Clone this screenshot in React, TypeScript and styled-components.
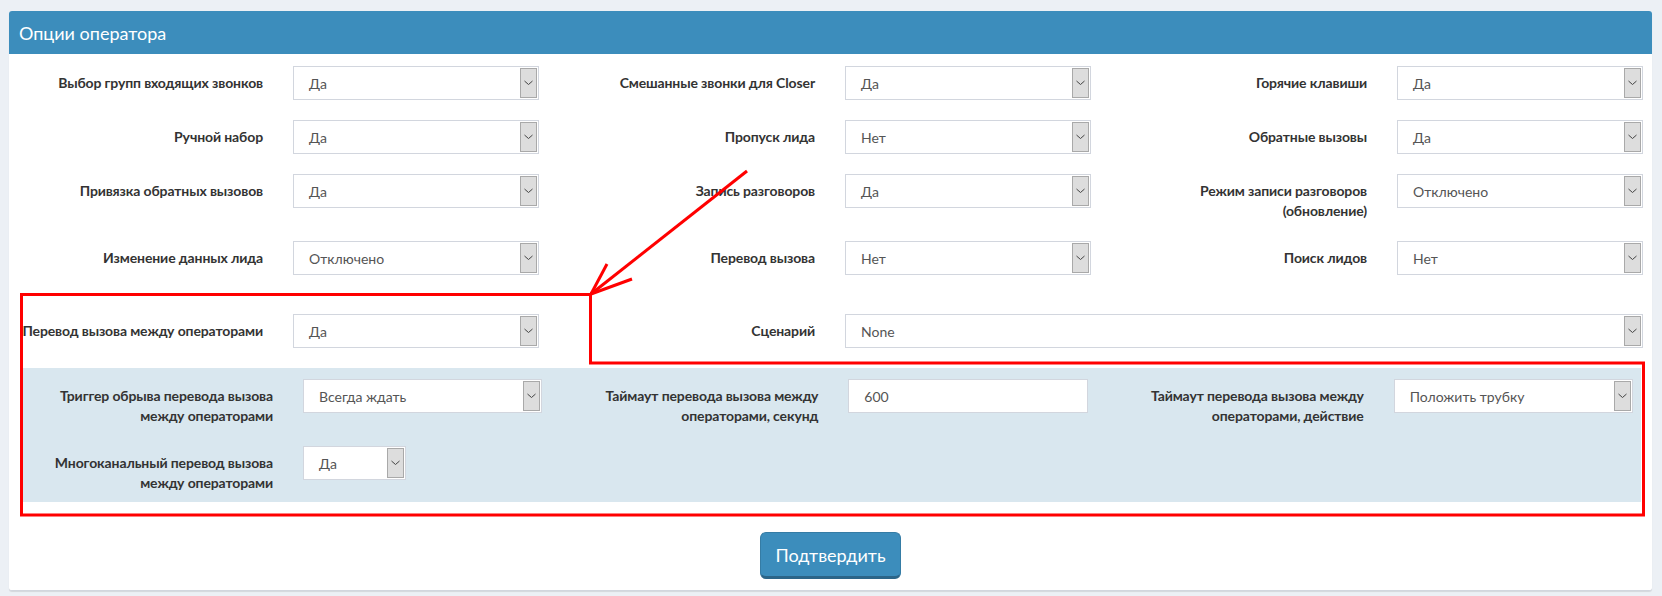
import React from "react";
import styled, { createGlobalStyle } from "styled-components";

// Operator options form (AdminLTE-like box) with a red hand-drawn annotation on top

const GlobalStyle = createGlobalStyle`
  html, body {
    margin: 0;
    padding: 0;
    background: #ecf0f5;
  }
  body {
    font-family: Lato, "Noto Sans", "Liberation Sans", sans-serif;
    color: #333;
  }
  * {
    box-sizing: border-box;
  }
`;

type Option = {
  label: React.ReactNode;
  value: string;
  kind?: "select" | "input";
  width?: number;
  span?: number;
};

const mainRows: Option[] = [
  { label: "Выбор групп входящих звонков", value: "Да" },
  { label: "Смешанные звонки для Closer", value: "Да" },
  { label: "Горячие клавиши", value: "Да" },
  { label: "Ручной набор", value: "Да" },
  { label: "Пропуск лида", value: "Нет" },
  { label: "Обратные вызовы", value: "Да" },
  { label: "Привязка обратных вызовов", value: "Да" },
  { label: "Запись разговоров", value: "Да" },
  {
    label: (
      <>
        Режим записи разговоров
        <br />
        (обновление)
      </>
    ),
    value: "Отключено",
  },
  { label: "Изменение данных лида", value: "Отключено" },
  { label: "Перевод вызова", value: "Нет" },
  { label: "Поиск лидов", value: "Нет" },
];

const transferRows: Option[] = [
  { label: "Перевод вызова между операторами", value: "Да" },
  { label: "Сценарий", value: "None", span: 2 },
];

const subRows: Option[] = [
  {
    label: (
      <>
        Триггер обрыва перевода вызова
        <br />
        между операторами
      </>
    ),
    value: "Всегда ждать",
  },
  {
    label: (
      <>
        Таймаут перевода вызова между
        <br />
        операторами, секунд
      </>
    ),
    value: "600",
    kind: "input",
  },
  {
    label: (
      <>
        Таймаут перевода вызова между
        <br />
        операторами, действие
      </>
    ),
    value: "Положить трубку",
  },
  {
    label: (
      <>
        Многоканальный перевод вызова
        <br />
        между операторами
      </>
    ),
    value: "Да",
    width: 103,
  },
];

const Chevron = () => (
  <svg width="9" height="6" viewBox="0 0 9 6">
    <polyline points="0.5,1 4.5,4.5 8.5,1" fill="none" stroke="#444" strokeWidth="1" />
  </svg>
);

const FieldRow = ({ opt }: { opt: Option }) => (
  <Field $span={opt.span || 1}>
    <Label>{opt.label}</Label>
    {opt.kind === "input" ? (
      <TextBox>{opt.value}</TextBox>
    ) : (
      <SelectBox $width={opt.width}>
        <span>{opt.value}</span>
        <ArrowButton>
          <Chevron />
        </ArrowButton>
      </SelectBox>
    )}
  </Field>
);

const App = () => {
  return (
    <Page>
      <GlobalStyle />
      <Box>
        <BoxHeader>
          <BoxTitle>Опции оператора</BoxTitle>
        </BoxHeader>
        <BoxBody>
          <FieldGrid>
            {mainRows.map((opt, i) => (
              <FieldRow key={i} opt={opt} />
            ))}
          </FieldGrid>
          <FieldGrid $top={39}>
            {transferRows.map((opt, i) => (
              <FieldRow key={i} opt={opt} />
            ))}
          </FieldGrid>
          <SubPanel>
            <FieldGrid $inner>
              {subRows.map((opt, i) => (
                <FieldRow key={i} opt={opt} />
              ))}
            </FieldGrid>
          </SubPanel>
          <Footer>
            <SubmitButton type="button">Подтвердить</SubmitButton>
          </Footer>
        </BoxBody>
      </Box>

      {/* red annotation drawn over the screenshot */}
      <Annotation viewBox="0 0 1662 596" width="1662" height="596">
        <path
          d="M21.5 294.5 H590.5 V363 H1643.5 V515 H21.5 Z"
          fill="none"
          stroke="#ff0000"
          strokeWidth="3"
        />
        <line x1="747" y1="171" x2="591" y2="294" stroke="#ff0000" strokeWidth="3" />
        <line x1="591" y1="294" x2="607" y2="264" stroke="#ff0000" strokeWidth="3" />
        <line x1="591" y1="294" x2="632" y2="279" stroke="#ff0000" strokeWidth="3" />
      </Annotation>
    </Page>
  );
};

const Page = styled.div`
  position: relative;
  width: 1662px;
  min-height: 596px;
  padding: 11px 10px 6px 9px;
`;

const Box = styled.div`
  background: #fff;
  border-radius: 3px;
  box-shadow: 0 1px 1px rgba(0, 0, 0, 0.1);
  border-bottom: 1px solid #d2d6de;
`;

const BoxHeader = styled.div`
  height: 43px;
  display: flex;
  align-items: center;
  padding: 0 10px;
  background: #3c8dbc;
  border-radius: 3px 3px 0 0;
`;

const BoxTitle = styled.h3`
  margin: 0;
  font-size: 18px;
  font-weight: 400;
  color: #fff;
`;

const BoxBody = styled.div`
  padding-top: 12px;
  padding-bottom: 11px;
`;

const FieldGrid = styled.div<{ $top?: number; $inner?: boolean }>`
  display: grid;
  grid-template-columns: repeat(3, 1fr);
  row-gap: 20px;
  margin: ${(p) => (p.$inner ? "0 -7px 0 -10px" : `${p.$top || 0}px -6px 0 -7px`)};
`;

const Field = styled.div<{ $span: number }>`
  grid-column: span ${(p) => p.$span};
  display: grid;
  grid-template-columns: 246px 1fr;
  column-gap: 30px;
  align-items: start;
  padding: 0 15px;
`;

const Label = styled.label`
  padding-top: 7px;
  font-size: 14px;
  line-height: 20px;
  font-weight: 700;
  letter-spacing: -0.12px;
  text-align: right;
  white-space: nowrap;
  color: #333;
`;

const SelectBox = styled.div<{ $width?: number }>`
  width: ${(p) => (p.$width ? `${p.$width}px` : "100%")};
  height: 34px;
  display: flex;
  align-items: center;
  justify-content: space-between;
  padding: 1px 1px 1px 15px;
  background: #fff;
  border: 1px solid #d2d6de;
  font-size: 14px;
  color: #555;
`;

const ArrowButton = styled.span`
  width: 17px;
  height: 100%;
  display: flex;
  align-items: center;
  justify-content: center;
  background: #dddddd;
  border: 1px solid #a9a9a9;
`;

const TextBox = styled.div`
  height: 34px;
  display: flex;
  align-items: center;
  padding: 0 15px;
  background: #fff;
  border: 1px solid #d2d6de;
  font-size: 14px;
  color: #555;
`;

const SubPanel = styled.div`
  margin: 20px 11px 0 13px;
  padding: 11px 0 9px;
  background: #d9e7ef;
`;

const Footer = styled.div`
  display: flex;
  justify-content: center;
  margin-top: 30px;
`;

const SubmitButton = styled.button`
  height: 47px;
  padding: 0 14px;
  background: #3c8dbc;
  border: 1px solid #357ca5;
  border-bottom: 3px solid #2b6588;
  border-radius: 6px;
  font-family: inherit;
  font-size: 18px;
  color: #fff;
`;

const Annotation = styled.svg`
  position: absolute;
  top: 0;
  left: 0;
  pointer-events: none;
`;

export default App;
